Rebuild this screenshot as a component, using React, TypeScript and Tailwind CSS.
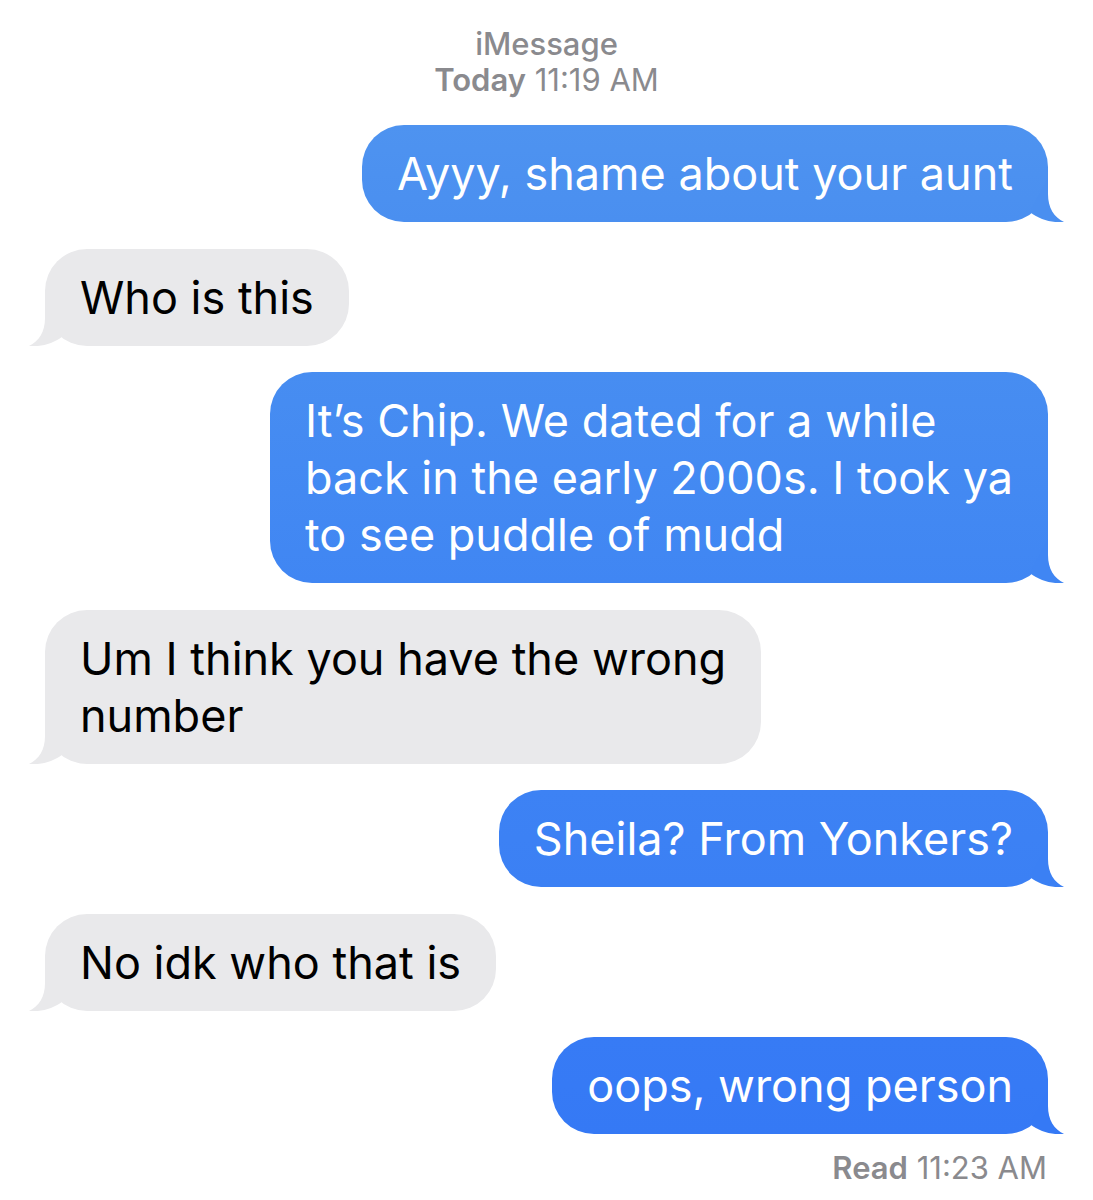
import React from "react";

type Msg = {
  from: "me" | "them";
  lines: string[];
  bg: string;
  tail: string;
};

const messages: Msg[] = [
  {
    from: "me",
    lines: ["Ayyy, shame about your aunt"],
    bg: "bg-gradient-to-b from-[#4e93f0] to-[#4a8ff0]",
    tail: "#4a8ff0",
  },
  { from: "them", lines: ["Who is this"], bg: "bg-[#e9e9eb]", tail: "#e9e9eb" },
  {
    from: "me",
    lines: [
      "It’s Chip. We dated for a while",
      "back in the early 2000s. I took ya",
      "to see puddle of mudd",
    ],
    bg: "bg-gradient-to-b from-[#478df1] to-[#4086f3]",
    tail: "#4086f3",
  },
  {
    from: "them",
    lines: ["Um I think you have the wrong", "number"],
    bg: "bg-[#e9e9eb]",
    tail: "#e9e9eb",
  },
  {
    from: "me",
    lines: ["Sheila? From Yonkers?"],
    bg: "bg-gradient-to-b from-[#3d82f4] to-[#3b80f4]",
    tail: "#3b80f4",
  },
  { from: "them", lines: ["No idk who that is"], bg: "bg-[#e9e9eb]", tail: "#e9e9eb" },
  {
    from: "me",
    lines: ["oops, wrong person"],
    bg: "bg-gradient-to-b from-[#377bf5] to-[#3579f5]",
    tail: "#3579f5",
  },
];

function Tail({ side, color }: { side: "me" | "them"; color: string }) {
  // bubble tail, drawn over the bubble's bottom corner
  return (
    <svg
      viewBox="0 0 34 44"
      className={`absolute bottom-0 w-[34px] h-[44px] ${
        side === "me" ? "right-[-16px]" : "left-[-16px] -scale-x-100"
      }`}
    >
      <path
        d="M18 0 L18 16 C18 30 24 39 34 44 C22 45 10 42 0 34 Z"
        fill={color}
      />
    </svg>
  );
}

function Bubble({ msg }: { msg: Msg }) {
  const me = msg.from === "me";
  return (
    <div className={`flex ${me ? "justify-end" : "justify-start"}`}>
      <div
        className={`relative rounded-[42px] px-[35px] py-[20px] text-[45px] leading-[57px] ${msg.bg} ${
          me ? "text-white" : "text-black"
        }`}
      >
        <Tail side={msg.from} color={msg.tail} />
        <div className="relative">
          {msg.lines.map((l, i) => (
            <div key={i} className="whitespace-nowrap">
              {l}
            </div>
          ))}
        </div>
      </div>
    </div>
  );
}

export default function App() {
  return (
    <div
      className="w-[1093px] h-[1200px] bg-white overflow-hidden"
      style={{ fontFamily: "Inter, 'Liberation Sans', sans-serif" }}
    >
      <div className="pt-[26px] flex flex-col items-center text-[31px] leading-[36px] text-[#8a8a8e]">
        <div className="font-medium">iMessage</div>
        <div>
          <span className="font-semibold">Today</span> 11:19 AM
        </div>
      </div>

      <div className="px-[45px] pt-[27px] flex flex-col gap-[26.5px]">
        {messages.map((m, i) => (
          <Bubble key={i} msg={m} />
        ))}
      </div>

      <div className="px-[46px] pt-[16px] flex justify-end text-[31px] leading-[36px] text-[#8a8a8e]">
        <span>
          <span className="font-semibold">Read</span> 11:23 AM
        </span>
      </div>
    </div>
  );
}
